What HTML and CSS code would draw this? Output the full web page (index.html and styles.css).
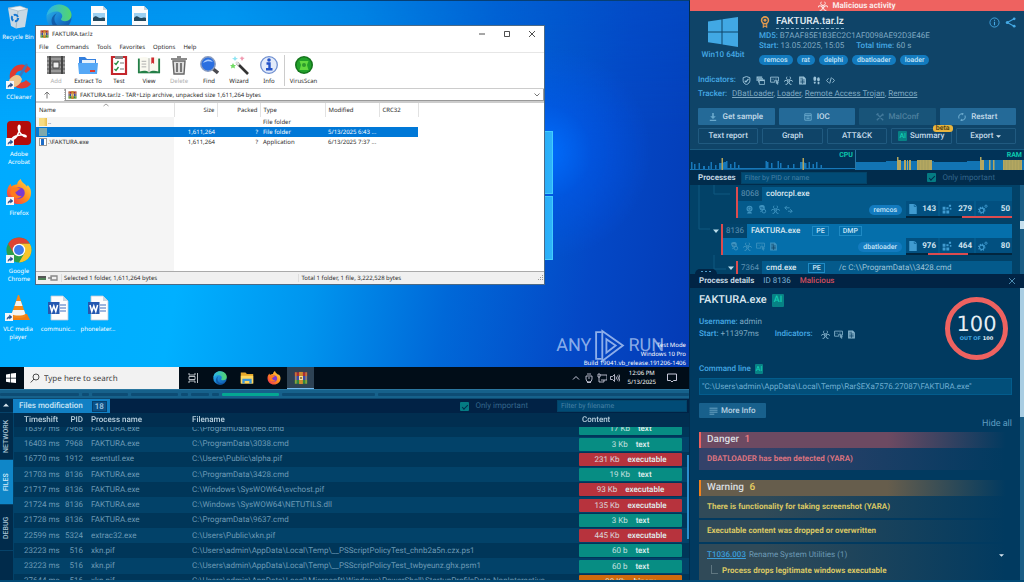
FILE: index.html
```html
<!DOCTYPE html>
<html lang="en">
<head>
<meta charset="utf-8">
<title>FAKTURA.tar.lz - Malicious activity</title>
<link rel="stylesheet" href="styles.css">
</head>
<body>
<svg class="defs" aria-hidden="true">
  <defs>
    <linearGradient id="g-edge" x1="0" y1="0" x2="1" y2="1"><stop offset="0" stop-color="#2fc0e8"/><stop offset=".5" stop-color="#1a84d6"/><stop offset="1" stop-color="#0c4fa0"/></linearGradient>
    <linearGradient id="g-edge2" x1="0" y1="0" x2="1" y2="0"><stop offset="0" stop-color="#2ab4ea"/><stop offset="1" stop-color="#55d66a"/></linearGradient>
    <linearGradient id="g-fox" x1="1" y1="0" x2="0" y2="1"><stop offset="0" stop-color="#ffe14a"/><stop offset=".5" stop-color="#ff8a1c"/><stop offset="1" stop-color="#f0245c"/></linearGradient>
    <symbol id="biohazard" viewBox="0 0 16 16"><g fill="none" stroke="currentColor" stroke-width="1.500"><path id="horn" d="M5.400 1.200A3.600 3.600 0 1 0 10.600 1.200"/><use href="#horn" transform="rotate(120 8 8.800)"/><use href="#horn" transform="rotate(240 8 8.800)"/><circle cx="8" cy="8.800" r="2.200" stroke-width="1"/></g></symbol>
    <symbol id="report" viewBox="0 0 16 16"><path d="M2 1h8.500L14 4.500V15H2z" fill="currentColor"/><path d="M4 4h5M4 7h8M4 9.500h8M4 12h8M8 6v8" stroke="#0f4468" stroke-width="1.200"/></symbol>
    <symbol id="screen" viewBox="0 0 16 16"><path d="M1 2h14v7h-3v-1.500h-3.500V11H1z" fill="none" stroke="currentColor" stroke-width="1.500"/><path d="M3.500 4.500v3M6 4.500v3M8.500 5h4M11 9l4.500 2-2 1 1 2.500-1.200.5-1-2.400-1.300 1z" fill="currentColor" stroke="currentColor" stroke-width=".7"/></symbol>
    <symbol id="windows-stack" viewBox="0 0 16 16"><path d="M1 1h10v2H3v6H1zM3.500 3.800h9V6H5v5.500H3.500z" fill="currentColor"/><path d="M6 6.800h9.200V15H6z" fill="none" stroke="currentColor" stroke-width="1.400"/><path d="M6 8h9" stroke="currentColor" stroke-width="2"/></symbol>
    <symbol id="shield" viewBox="0 0 16 16"><path d="M8 1l6 2v5c0 3.500-2.500 6-6 7.300C4.500 14 2 11.500 2 8V3z" fill="none" stroke="currentColor" stroke-width="1.700"/><path d="M4.800 8.500l2.200 2 4.500-5.500" fill="none" stroke="currentColor" stroke-width="2"/></symbol>
    <symbol id="steps" viewBox="0 0 16 16"><g fill="currentColor"><ellipse cx="5" cy="5" rx="2.600" ry="4"/><path d="M3.200 10h3.400v2.200a1.700 1.700 0 0 1-3.400 0z"/><ellipse cx="11.500" cy="6" rx="2.400" ry="3.700"/><path d="M10 10.600h3.200v2.600a1.600 1.600 0 0 1-3.200 0z"/></g></symbol>
    <symbol id="code" viewBox="0 0 16 16"><path d="M4.500 4L1 8l3.500 4M11.500 4L15 8l-3.500 4M9.500 2.500l-3 11" fill="none" stroke="currentColor" stroke-width="1.600"/></symbol>
    <symbol id="webcam" viewBox="0 0 16 16"><circle cx="8" cy="6.500" r="5.300" fill="currentColor"/><circle cx="8" cy="6.500" r="2.600" fill="none" stroke="#0b5c8e" stroke-width="1.200"/><path d="M5 12.500h6l1.500 2.500h-9z" fill="currentColor"/></symbol>
    <symbol id="bug" viewBox="0 0 16 16"><path d="M2 4a5 3.500 0 0 1 10-1v4a5 3 0 0 1-8 2z" fill="currentColor"/><path d="M4 4.500h5M5 7l5-1" stroke="#0b5c8e"/><circle cx="10.500" cy="11" r="3.200" fill="none" stroke="currentColor" stroke-width="1.600"/><path d="M4 12l3-1.500" stroke="currentColor" stroke-width="1.600"/></symbol>
    <symbol id="swap" viewBox="0 0 16 16"><path d="M5 1.500L1.500 5 5 8.500M1.500 5H10M11 7.500l3.500 3.500-3.500 3.500M14.500 11H7" fill="none" stroke="currentColor" stroke-width="1.700"/></symbol>
    <symbol id="doc" viewBox="0 0 16 16"><path d="M2 0h8.500L14 3.500V16H2z" fill="currentColor"/><path d="M10 .5V4h3.500" stroke="#035788" fill="none"/></symbol>
    <symbol id="modules" viewBox="0 0 16 16"><path d="M1 4.500h4.500V9H1zM1 10.500h4.500V15H1zM7 10.500h4.500V15H7zM7 5h3.500v3.500H7zM11 1h3.500v3.500H11zM12.500 6.500H15V9h-2.500z" fill="currentColor"/></symbol>
    <symbol id="gears" viewBox="0 0 16 16"><g fill="none" stroke="currentColor"><circle cx="6" cy="10" r="3.500" stroke-width="1.800"/><circle cx="6" cy="10" r="5" stroke-width="1.800" stroke-dasharray="1.900 2.030"/><circle cx="12.800" cy="3.500" r="1.800" stroke-width="1.400"/></g></symbol>
    <symbol id="books" viewBox="0 0 22 20"><path d="M1 1h20v6H1z" fill="#a82c38"/><path d="M1 7h20v6H1z" fill="#3c49a8"/><path d="M1 13h20v6H1z" fill="#2f8740"/><path d="M3 1v18M19 1v18" stroke="#d9b23b" stroke-width="1.500"/><path d="M8 0h6v20H8z" fill="#cf8b2d"/><path d="M8 7h6v6H8z" fill="#f4e09a"/><path d="M10 8.500h2v3h-2z" fill="#6b4718"/></symbol>
    <symbol id="edge" viewBox="0 0 28 28"><circle cx="14" cy="14" r="13.500" fill="url(#g-edge)"/><path d="M.7 12.500C2 5 7.500.5 14 .5c8 0 13.500 5.700 13.500 11.300 0 4-3.200 6.700-7 6.700-3 0-4.300-1-4.300-2 0-.8 1.300-1.300 1.300-3.500 0-3-3-5-6.500-5-4 0-8 2-10.300 4.500z" fill="url(#g-edge2)"/><path d="M9 16c0 6 5.500 9.500 11 8.500 2-.4 4-1.400 5-2.500-2 3.500-6 5.500-10.500 5.500C8 27 5.500 21 6 17c.4-3.500 3-6 5.500-7C10 11.500 9 13.500 9 16z" fill="#0d4f9c" opacity=".75"/></symbol>
    <symbol id="firefox" viewBox="0 0 28 28"><path d="M14 27C6.500 27 1 21.500 1 14.500c0-4 1.500-7 4-9.500l.8 3.200C8 6.500 10 6 12 6c0-2.500 2-5 4-6 .5 4 4.500 5 6.500 8l1-1.500C26.500 10 27 12 27 15c0 7-5.500 12-13 12z" fill="url(#g-fox)"/><circle cx="14" cy="15" r="6.200" fill="#7a3ad0"/><path d="M6 11c3-3 7-1.500 10-.5-3 .8-3.500 3-6 3.500.5 3 3.500 5 7 4-2 4-10 3.500-12-1.500-.6-1.800-.4-4 1-5.500z" fill="#ff7a1c"/></symbol>
    <symbol id="chrome" viewBox="0 0 28 28"><circle cx="14" cy="14" r="13.500" fill="#2c9e4b"/><path d="M14 .5A13.500 13.500 0 0 1 25.700 7.300H14L8.200 17.300 2.300 7.300A13.500 13.500 0 0 1 14 .5z" fill="#dd4433"/><path d="M25.700 7.300A13.500 13.500 0 0 1 14 27.500L19.800 17.500 14 7.300z" fill="#f8c52c"/><circle cx="14" cy="14" r="6.700" fill="#fff"/><circle cx="14" cy="14" r="5.300" fill="#3b7ded"/></symbol>
    <symbol id="word" viewBox="0 0 22 26"><path d="M4 1h12l5 5v19H4z" fill="#fdfdfd" stroke="#b9c9da" stroke-width=".8"/><path d="M16 1v5h5z" fill="#c8d6e2"/><path d="M13 10h6M13 13h6M13 16h6" stroke="#7f9fd4" stroke-width="1.300"/><path d="M1 7h11.500v12H1z" fill="#2457b0"/><path d="M3 10l1.800 6.500 2-5.500 2 5.500L10.600 10" stroke="#fff" stroke-width="1.500" fill="none"/></symbol>
    <symbol id="picture" viewBox="0 0 18 20"><path d="M1 0h12l4 4v16H1z" fill="#fbfcfd"/><path d="M13 0v4h4z" fill="#c4d0da"/><path d="M3 7h12v8H3z" fill="#9cd0f2"/><path d="M3 12c3-4 5 0 7 0s3-1 5 0v3H3z" fill="#23475c"/></symbol>
    <symbol id="shortcut" viewBox="0 0 8 8"><path d="M0 0h8v8H0z" fill="#f3f6fa"/><path d="M2 6.500c0-2 1-3 2.500-3V2L7 4 4.500 6V4.800" fill="#24508e" stroke="#24508e" stroke-width=".5"/></symbol>
    <symbol id="folder" viewBox="0 0 18 16"><path d="M1 1h6l2 2h8v12H1z" fill="#e4a72a"/><path d="M1 5h16v10H1z" fill="#ffd75e"/><path d="M3 9h12v6h-3v-3H6v3H3z" fill="#3a95d8"/></symbol>
  </defs>
</svg>
<main class="app">
  <section class="left">
    <div class="screen">
      <i class="pane pane-top"></i><i class="pane pane-bottom"></i>
      <div class="shortcut s-bin"><svg viewBox="0 0 22 24"><path d="M1 3l12-2 8 3-3 18-9 1.500L4 21z" fill="#c9d9e4"/><path d="M1 3l10 3 10-2-8-3z" fill="#eef5f9" stroke="#8fa9ba" stroke-width=".6"/><path d="M11 6l-2 17" stroke="#a3b8c5"/><circle cx="8" cy="13" r="3.200" fill="none" stroke="#1577d2" stroke-width="2" stroke-dasharray="5 1.700"/></svg><span>Recycle Bin</span></div>
      <div class="shortcut s-cc"><svg viewBox="0 0 26 26"><path d="M25 6A12 12 0 1 0 25 21l-5-4a6 6 0 1 1 0-7z" fill="#df3c31"/><path d="M21 1l-7 12" stroke="#3a78bd" stroke-width="2.500"/><path d="M3 17c4-5 8-6 11-4l2 3c-1 5-5 8-11 9z" fill="#eec58c"/><use href="#shortcut" x="0" y="18" width="8" height="8"/></svg><span>CCleaner</span></div>
      <div class="shortcut s-pdf"><svg viewBox="0 0 26 26"><rect x="1" y="1" width="24" height="24" rx="4" fill="#b30d0b"/><path d="M6 19c1-3 12-6 14-3 1 2-5 0-7-5-2-6 1-7 1-4 0 5-5 14-8 12z" fill="none" stroke="#fff" stroke-width="1.600"/><use href="#shortcut" x="0" y="18" width="8" height="8"/></svg><span>Adobe Acrobat</span></div>
      <div class="shortcut s-fox"><svg viewBox="0 0 26 26"><use href="#firefox" width="26" height="26"/><use href="#shortcut" x="0" y="18" width="8" height="8"/></svg><span>Firefox</span></div>
      <div class="shortcut s-chrome"><svg viewBox="0 0 26 26"><use href="#chrome" width="26" height="26"/><use href="#shortcut" x="0" y="18" width="8" height="8"/></svg><span>Google Chrome</span></div>
      <div class="shortcut s-vlc"><svg viewBox="0 0 26 26"><path d="M5 19h17l3 6H1z" fill="#ef7d15"/><path d="M13 0h1l7 21c-3 3-12 3-15 0z" fill="#f58a1b"/><path d="M11.200 6h4.600l1.700 5h-8zM8 15h11l1.400 4c-3 2-11 2-13.800 0z" fill="#f4f4f2"/><use href="#shortcut" x="0" y="18" width="8" height="8"/></svg><span>VLC media player</span></div>
      <div class="shortcut s-edge"><svg viewBox="0 0 28 28"><use href="#edge" width="28" height="28"/></svg></div>
      <div class="shortcut pic s-pic1"><svg viewBox="0 0 18 20"><use href="#picture" width="18" height="20"/></svg></div>
      <div class="shortcut pic s-pic2"><svg viewBox="0 0 18 20"><use href="#picture" width="18" height="20"/></svg></div>
      <div class="shortcut s-doc1"><svg viewBox="0 0 22 26"><use href="#word" width="22" height="26"/></svg><span>communic...</span></div>
      <div class="shortcut s-doc2"><svg viewBox="0 0 22 26"><use href="#word" width="22" height="26"/></svg><span>phonelater...</span></div>

      <div class="window">
        <header class="win-title"><svg class="i8" viewBox="0 0 22 20"><use href="#books" width="22" height="20"/></svg><span>FAKTURA.tar.lz</span>
          <div class="win-ctl"><button aria-label="Minimize"><svg viewBox="0 0 8 8"><path d="M1 4h6" stroke="#222" stroke-width=".8" fill="none"/></svg></button><button aria-label="Maximize"><svg viewBox="0 0 8 8"><path d="M1.500 1.500h5v5h-5z" stroke="#222" stroke-width=".8" fill="none"/></svg></button><button aria-label="Close"><svg viewBox="0 0 8 8"><path d="M1 1l6 6M7 1L1 7" stroke="#222" stroke-width=".8" fill="none"/></svg></button></div>
        </header>
        <nav class="menu"><button>File</button><button>Commands</button><button>Tools</button><button>Favorites</button><button>Options</button><button>Help</button></nav>
        <div class="tools">
          <button class="off"><svg viewBox="0 0 20 20"><path d="M1 1h18v18H1z" fill="#777"/><path d="M1 4h18M1 8h18M1 12h18M1 16h18" stroke="#bbb"/><path d="M4 1v18M16 1v18" stroke="#444" stroke-width="2"/><path d="M7 7h6v6H7z" fill="#eee" stroke="#444"/></svg>Add</button>
          <button><svg viewBox="0 0 20 20"><path d="M1 2h6l2 2h9v4H1z" fill="#3580de"/><path d="M4 5h13v5H4z" fill="#e7f1fb"/><path d="M0 8h20l-1 11H1z" fill="#55a8f6"/><path d="M12 15h5v2h-5z" fill="#e03b30"/></svg>Extract To</button>
          <button><svg viewBox="0 0 20 20"><path d="M3 2h14v17H3z" fill="#fff" stroke="#c4262c" stroke-width="2.200"/><path d="M6 1h8v3H6z" fill="#888"/><path d="M5.500 8l1.500 1.500L9.500 6M5.500 14l1.500 1.500 2.500-3.500" stroke="#248a3e" stroke-width="1.300" fill="none"/><path d="M11 8h4M11 14h4" stroke="#777"/></svg>Test</button>
          <button><svg class="wide" viewBox="0 0 26 20"><path d="M1 3h24v16H1z" fill="#247f47"/><path d="M3 2c4-1 7-1 10 1 3-2 6-2 10-1v15c-4-1-7-1-10 1-3-2-6-2-10-1z" fill="#faf9f0"/><path d="M13 3v15M5 6h5M5 9h5M5 12h5" stroke="#aaa"/><path d="M15.500 2h3v7l-1.500-1.500L15.500 9z" fill="#cf2c31"/></svg>View</button>
          <button class="off"><svg viewBox="0 0 20 20"><path d="M4 6h12l-1 13H5z" fill="#ddd" stroke="#666" stroke-width="1.400"/><path d="M2 4h16M8 2h4M8 8v9M12 8v9" stroke="#666" stroke-width="1.700"/></svg>Delete</button>
          <button><svg viewBox="0 0 20 20"><path d="M13 13l6 5" stroke="#4b4b50" stroke-width="3.500"/><circle cx="9" cy="9" r="7.200" fill="#2b6fe0" stroke="#8a9cbf" stroke-width="1.500"/><path d="M4 8c2-4 7-5 10-1-4-1-6-1-10 1z" fill="#a9ccff"/></svg>Find</button>
          <button><svg viewBox="0 0 20 20"><path d="M8 8l11 11" stroke="#333" stroke-width="2.600"/><path d="M7 7l3 3" stroke="#ddd" stroke-width="2.600"/><path d="M4 8l1 2 2 0-1.500 1.500.5 2-2-1-2 1 .5-2L1 10h2z" fill="#72dc66"/><path d="M6 1l1 2 2 .5-2 1L6 6 5 4.500l-2-1L5 3z" fill="#8ce4f2"/><path d="M13 1l.7 1.600 2 .4-1.500 1L13 6l-1-2-1.500-1 1.700-.5z" fill="#f097ae"/></svg>Wizard</button>
          <button><svg viewBox="0 0 20 20"><circle cx="10" cy="10" r="8.300" fill="#e3ebfa" stroke="#6f8fd0" stroke-width="1.300"/><path d="M7.500 8.500h3V14M7 14.300h6.500" stroke="#2453c8" stroke-width="2.400" fill="none"/><circle cx="10" cy="5" r="1.800" fill="#2453c8"/></svg>Info</button>
          <button class="scan"><svg viewBox="0 0 20 20"><circle cx="10" cy="10" r="9" fill="#15751d"/><circle cx="10" cy="10" r="7.400" fill="#22a12a"/><path d="M5.500 6h9l-1.500 4 1.500 5h-9L7 10z" fill="#63d93f"/><circle cx="10" cy="10" r="2" fill="#2f9a2c"/></svg>VirusScan</button>
        </div>
        <div class="addr"><button aria-label="Up one level"><svg viewBox="0 0 8 8"><path d="M4 7.500V1M1.500 3.500L4 1l2.500 2.500" stroke="#777" fill="none"/></svg></button><div class="path"><svg class="i8" viewBox="0 0 22 20"><use href="#books" width="22" height="20"/></svg><span>FAKTURA.tar.lz - TAR+Lzip archive, unpacked size 1,611,264 bytes</span><svg class="chev" viewBox="0 0 8 8"><path d="M1.500 2.500L4 5l2.500-2.500" stroke="#777" fill="none"/></svg></div></div>
        <div class="listing">
        <table class="files-list">
          <colgroup><col class="c-name"><col class="c-size"><col class="c-size"><col class="c-type"><col class="c-mod"><col class="c-crc"></colgroup>
          <thead><tr><th>Name<svg class="sort" viewBox="0 0 8 4"><path d="M1.500 3L4 1l2.500 2" stroke="#888" stroke-width=".8" fill="none"/></svg></th><th class="num">Size</th><th class="num">Packed</th><th>Type</th><th>Modified</th><th>CRC32</th></tr></thead>
          <tbody>
          <tr><td><div class="nm"><i class="fold"></i>..</div></td><td></td><td></td><td>File folder</td><td></td><td></td></tr>
          <tr class="sel"><td><div class="nm"><i class="fold"></i>.</div></td><td class="num">1,611,264</td><td class="num">?</td><td>File folder</td><td>5/13/2025 6:43 ...</td><td></td></tr>
          <tr><td><div class="nm"><i class="exe"></i>.\FAKTURA.exe</div></td><td class="num">1,611,264</td><td class="num">?</td><td>Application</td><td>6/13/2025 7:37 ...</td><td></td></tr>
          </tbody>
        </table>
        </div>
        <footer class="status"><svg viewBox="0 0 20 8"><path d="M0 2h8v4H0z" fill="#555"/><path d="M0 5h8" stroke="#48b058"/><path d="M10 4h4M13 2h6v4h-6z" stroke="#888" stroke-width="1.300" fill="none"/></svg><span>Selected 1 folder, 1,611,264 bytes</span><span>Total 1 folder, 1 file, 3,222,528 bytes</span><svg class="grip" viewBox="0 0 8 8"><path d="M6 1h1v1H6zM4 3h1v1H4zM6 3h1v1H6zM2 5h1v1H2zM4 5h1v1H4zM6 5h1v1H6z" fill="#999"/></svg></footer>
      </div>

      <div class="brand"><span>ANY</span><svg viewBox="0 0 30 34"><path d="M7 4H2v26h5M8 3v29l20-15zM12 11v13l9-7z" fill="none" stroke="currentColor" stroke-width="1.800"/></svg><span>RUN</span></div>
      <div class="build">Test Mode<br>Windows 10 Pro<br>Build 19041.vb_release.191206-1406</div>

      <div class="taskbar">
        <button class="start" aria-label="Start"><svg viewBox="0 0 10 10"><path d="M0 1.400l4.300-.7v4H0zM5 .6L10 0v4.700H5zM0 5.400h4.300v4L0 8.700zM5 5.400h5V10l-5-.6z" fill="#fff"/></svg></button>
        <label class="search"><svg viewBox="0 0 10 10"><circle cx="6" cy="4" r="3" fill="none" stroke="#222" stroke-width=".8"/><path d="M4 6L.7 9.500" stroke="#222" stroke-width=".8"/></svg><input type="text" placeholder="Type here to search" aria-label="Type here to search"></label>
        <button aria-label="Task view"><svg viewBox="0 0 14 14"><path d="M3 2v2h6V2M3 12v-2h6v2M3 5.500h6v3H3zM11.500 2v10" fill="none" stroke="#cdd3d8" stroke-width=".9"/></svg></button>
        <button aria-label="Edge"><svg viewBox="0 0 28 28"><use href="#edge" width="28" height="28"/></svg></button>
        <button aria-label="Explorer"><svg viewBox="0 0 18 16"><use href="#folder" width="18" height="16"/></svg></button>
        <button aria-label="Firefox"><svg viewBox="0 0 28 28"><use href="#firefox" width="28" height="28"/></svg></button>
        <button class="on" aria-label="WinRAR"><svg viewBox="0 0 22 20"><use href="#books" width="22" height="20"/></svg></button>
        <div class="tray">
          <svg viewBox="0 0 10 10"><path d="M2 6.500L5 3.500l3 3" fill="none" stroke="#dde" stroke-width=".9"/></svg>
          <svg viewBox="0 0 10 10"><path d="M2 3h6v3a3 3 0 0 1-6 0zM3 1h4M3 9.500h4M4 5h2" fill="none" stroke="#dde" stroke-width=".8"/></svg>
          <svg viewBox="0 0 10 10"><path d="M3 2h7v5H4M1 1h2v3H1zM2 4v5h5M7 7v2" fill="none" stroke="#dde" stroke-width=".8"/></svg>
          <svg viewBox="0 0 10 10"><path d="M.5 3.500h2l2-2v7l-2-2h-2zM6 3.500q1 1.500 0 3M7.500 2.500q2 2.500 0 5M9 1.500q2 3.500 0 7" fill="none" stroke="#dde" stroke-width=".8"/></svg>
          <div class="clock">12:06 PM<br>5/13/2025</div>
          <svg viewBox="0 0 10 10"><path d="M.5 1h9v6.500h-3L5 9 3.500 7.500h-3z" fill="none" stroke="#dde" stroke-width=".9"/></svg>
        </div>
      </div>
    </div>

    <div class="timeline"><i style="flex-grow:79"></i><i style="flex-grow:7"></i><i style="flex-grow:37"></i><i style="flex-grow:47"></i><i style="flex-grow:7"></i><i style="flex-grow:18"></i><i style="flex-grow:7"></i><i class="on" style="flex-grow:57"></i><i style="flex-grow:94"></i><i style="flex-grow:312"></i></div>

    <section class="bottom">
      <nav class="side"><button class="fold-btn" aria-label="Collapse"><svg viewBox="0 0 8 8"><path d="M1 5.500h6L4 2.500z" fill="#d8e6ef"/></svg></button><button class="t1">NETWORK</button><button class="t2 on">FILES</button><button class="t3">DEBUG</button></nav>
      <div class="files">
        <header class="files-bar"><h2>Files modification <b>18</b></h2><label class="tick"><input type="checkbox" checked>Only important</label><input class="filter" type="text" placeholder="Filter by filename" aria-label="Filter by filename"></header>
        <div class="files-scroll">
        <table class="events">
          <colgroup><col class="e-time"><col class="e-pid"><col class="e-proc"><col><col class="e-cont"></colgroup>
          <thead><tr><th>Timeshift</th><th class="num">PID</th><th>Process name</th><th>Filename</th><th>Content</th></tr></thead>
          <tbody>
          <tr><td>16397 ms</td><td class="num">7968</td><td>FAKTURA.exe</td><td>C:\ProgramData\neo.cmd</td><td><span class="tag"><span>17 Kb</span><b>text</b></span></td></tr>
          <tr><td>16403 ms</td><td class="num">7968</td><td>FAKTURA.exe</td><td>C:\ProgramData\3038.cmd</td><td><span class="tag"><span>3 Kb</span><b>text</b></span></td></tr>
          <tr><td>16770 ms</td><td class="num">1912</td><td>esentutl.exe</td><td>C:\Users\Public\alpha.pif</td><td><span class="tag exec"><span>231 Kb</span><b>executable</b></span></td></tr>
          <tr><td>21703 ms</td><td class="num">8136</td><td>FAKTURA.exe</td><td>C:\ProgramData\3428.cmd</td><td><span class="tag"><span>19 Kb</span><b>text</b></span></td></tr>
          <tr><td>21717 ms</td><td class="num">8136</td><td>FAKTURA.exe</td><td>C:\Windows \SysWOW64\svchost.pif</td><td><span class="tag exec"><span>93 Kb</span><b>executable</b></span></td></tr>
          <tr><td>21724 ms</td><td class="num">8136</td><td>FAKTURA.exe</td><td>C:\Windows \SysWOW64\NETUTILS.dll</td><td><span class="tag exec"><span>135 Kb</span><b>executable</b></span></td></tr>
          <tr><td>21728 ms</td><td class="num">8136</td><td>FAKTURA.exe</td><td>C:\ProgramData\9637.cmd</td><td><span class="tag"><span>3 Kb</span><b>text</b></span></td></tr>
          <tr><td>22599 ms</td><td class="num">5324</td><td>extrac32.exe</td><td>C:\Users\Public\xkn.pif</td><td><span class="tag exec"><span>445 Kb</span><b>executable</b></span></td></tr>
          <tr><td>23223 ms</td><td class="num">516</td><td>xkn.pif</td><td>C:\Users\admin\AppData\Local\Temp\__PSScriptPolicyTest_chnb2a5n.czx.ps1</td><td><span class="tag"><span>60 b</span><b>text</b></span></td></tr>
          <tr><td>23223 ms</td><td class="num">516</td><td>xkn.pif</td><td>C:\Users\admin\AppData\Local\Temp\__PSScriptPolicyTest_twbyeunz.ghx.psm1</td><td><span class="tag"><span>60 b</span><b>text</b></span></td></tr>
          <tr><td>27644 ms</td><td class="num">516</td><td>xkn.pif</td><td>C:\Users\admin\AppData\Local\Microsoft\Windows\PowerShell\StartupProfileData-NonInteractive</td><td><span class="tag bin"><span>28 Kb</span><b>binary</b></span></td></tr>
          </tbody>
        </table>
        <i class="thumb"></i>
        </div>
      </div>
    </section>
  </section>

  <aside class="right">
    <div class="verdict"><svg viewBox="0 0 16 16"><use href="#biohazard" width="16" height="16"/></svg>Malicious activity</div>
    <section class="task">
      <div class="sample">
        <div class="os"><svg viewBox="0 0 30 30"><path d="M0 4.500L13.500 2.500V14.500H0zM14.500 2.300L30 0V14.500H14.500zM0 15.500h13.500v11.700L0 25.300zM14.500 15.500H30V30l-15.500-2.500z" fill="#41a8e4"/></svg>Win10 64bit</div>
        <div class="info">
          <h1><svg viewBox="0 0 12 14"><circle cx="6" cy="5" r="4" fill="none" stroke="#e49a4d" stroke-width="1.800"/><circle cx="6" cy="5" r="1.700" fill="#e49a4d"/><path d="M4 8.500V13l2-1.500L8 13V8.500" fill="none" stroke="#e49a4d" stroke-width="1.300"/></svg><span>FAKTURA.tar.lz</span>
            <button class="ic push" aria-label="Info"><svg viewBox="0 0 12 12"><circle cx="6" cy="6" r="5" fill="none" stroke="#45a9e4"/><path d="M6 5.200V9M6 3v1.200" stroke="#45a9e4" stroke-width="1.200"/></svg></button><button class="ic" aria-label="Share"><svg viewBox="0 0 12 12"><path d="M10 2L2.500 6l7.500 4" fill="none" stroke="#45a9e4" stroke-width="1.200"/><circle cx="10" cy="2" r="1.500" fill="#45a9e4"/><circle cx="2.500" cy="6" r="1.700" fill="#45a9e4"/><circle cx="10" cy="10" r="1.500" fill="#45a9e4"/></svg></button></h1>
          <p><b>MD5:</b> B7AAF85E1B3EC2C1AF0098AE92D3E46E</p>
          <p><b>Start:</b> 13.05.2025, 15:05 <b class="total">Total time:</b> 60 s</p>
          <div class="chips"><span>remcos</span><span>rat</span><span>delphi</span><span>dbatloader</span><span>loader</span></div>
        </div>
      </div>
      <div class="line"><b>Indicators:</b><span class="icons"><svg><use href="#shield"/></svg><svg><use href="#windows-stack"/></svg><svg><use href="#screen"/></svg><svg><use href="#biohazard"/></svg><svg><use href="#report"/></svg><svg><use href="#steps"/></svg><svg><use href="#code"/></svg></span></div>
      <div class="line track"><b>Tracker:</b><span><a href="#">DBatLoader</a>, <a href="#">Loader</a>, <a href="#">Remote Access Trojan</a>, <a href="#">Remcos</a></span></div>
      <div class="actions a1">
        <button><svg viewBox="0 0 10 10"><path d="M4 0h2v4h2.500L5 7.500 1.500 4H4zM1 8.500h8V10H1z" fill="#6aa9cc"/></svg>Get sample</button>
        <button><svg viewBox="0 0 10 10"><path d="M1 1h8v8H1zM1 3h8M3 5h4M3 7h4" fill="none" stroke="#6aa9cc" stroke-width="1.200"/></svg>IOC</button>
        <button class="dim"><svg viewBox="0 0 10 10"><path d="M1 1l8 8M9 1L1 9M.5 2.500L3 .5M8 3l1.500-1" fill="none" stroke="#42799b" stroke-width="1.600"/></svg>MalConf</button>
        <button><svg viewBox="0 0 10 10"><path d="M1.500 7A4 4 0 0 1 5.500 1M8.500 3A4 4 0 0 1 4.500 9M4.500 0l1.800 1-1.500 1.500M5.500 10L3.700 9l1.500-1.500" fill="none" stroke="#6aa9cc" stroke-width="1.300"/></svg>Restart</button>
      </div>
      <div class="actions a2"><button>Text report</button><button>Graph</button><button>ATT&amp;CK</button><button><i class="ai">AI</i>Summary<em>beta</em></button><button>Export <svg class="car" viewBox="0 0 8 8"><path d="M0 2h8L4 6z" fill="#cfe0ec"/></svg></button></div>
    </section>
    <div class="load">
      <div class="cpu"><svg viewBox="0 0 165 20" preserveAspectRatio="none"><path d="M0 20v-1h1v-7h1.500v7H4v-5h1.500v5h3v-6H10v6h3v-3h2v3h3v-3h1.500v3h1v-7H22v7h3v-4h1.500v4H29v-6h4.500v-1H36v-1h1.500v7H40v-4h1.500v4H44v-6h1.500v6h2.500v-3h1.500v3h26v-7H77v1h1.500v6H81v-5h1.500v5h5v-7H89v7h1v-5h1.500v5h6v-3H99v3h4v-4h1.500v4H110v-6h4.500v1h2v5h2v-6h1.500v6h2.500v-4h1.500v4h2v-6h1.500v6h3v-3h1.500v3H165v1z" fill="#1778b9"/><path d="M31.500 8h1.500v12h-1.500zM112.500 8h1.500v12h-1.500z" fill="#b3a45c"/></svg>CPU</div>
      <div class="ram"><svg viewBox="0 0 168 20" preserveAspectRatio="none"><path d="M0 12h30v-1h48v1h33v-1h15v-1h42v10H0z" fill="#1274b4"/><path d="M41 7h1.500v3H45v10h-4zM48 10h2v10h-2zM51 10h1v10h-1zM53 10h2v10h-2zM61 10h15v10H61zM124 7h1.500v3H128v10h-4zM133 10h1.500v10H133zM137 10h1.500v10H137zM147 10h19v10h-19z" fill="#b4a760"/><path d="M63 10v10M66 10v10M69 10v10M72 10v10M149 10v10M152 10v10M155 10v10M158 10v10M161 10v10M164 10v10" stroke="#8f935f" stroke-width=".5"/></svg>RAM</div>
    </div>
    <header class="proc-bar"><h2>Processes</h2><input class="filter" type="text" placeholder="Filter by PID or name" aria-label="Filter by PID or name"><label class="tick"><input type="checkbox" checked>Only important</label></header>
    <div class="tree">
      <svg class="wires" viewBox="0 0 60 88"><path d="M9 0v44h11M24 0v9h16M24 70v14h12" fill="none" stroke="#0f5880"/></svg>
      <div class="proc deep"><div class="head"><i>8068</i><b>colorcpl.exe</b></div><div class="foot"><span class="icons"><svg><use href="#webcam"/></svg><svg><use href="#bug"/></svg><svg><use href="#biohazard"/></svg><svg><use href="#swap"/></svg></span><span class="chip">remcos</span><span class="stats u1"><span><svg><use href="#doc"/></svg>143</span><span><svg><use href="#modules"/></svg>279</span><span><svg><use href="#gears"/></svg>50</span></span></div></div>
      <div class="proc cur"><svg class="open" viewBox="0 0 8 8"><path d="M0 2h8L4 6.500z" fill="#b9dcea"/></svg><div class="head"><i>8136</i><b>FAKTURA.exe</b><u>PE</u><u>DMP</u></div><div class="foot"><span class="icons"><svg><use href="#bug"/></svg><svg><use href="#biohazard"/></svg><svg><use href="#screen"/></svg><svg><use href="#report"/></svg></span><span class="chip">dbatloader</span><span class="stats u2"><span><svg><use href="#doc"/></svg>976</span><span><svg><use href="#modules"/></svg>464</span><span><svg><use href="#gears"/></svg>80</span></span></div></div>
      <div class="proc deep"><svg class="open" viewBox="0 0 8 8"><path d="M0 2h8L4 6.500z" fill="#b9dcea"/></svg><div class="head"><i>7364</i><b>cmd.exe</b><u>PE</u><s>/c C:\\ProgramData\\3428.cmd</s></div><div class="foot"></div></div>
      <span class="more-tab" aria-hidden="true"><i></i><i></i><i></i></span>
      <i class="thumb2"></i>
    </div>
    <header class="det-bar"><h2>Process details</h2><span>ID 8136</span><strong>Malicious</strong><button class="ic" aria-label="Close"><svg viewBox="0 0 8 8"><path d="M1 1l6 6M7 1L1 7" stroke="#4a8ab0" fill="none"/></svg></button></header>
    <section class="details">
      <div class="det-body">
        <div class="det-top">
          <div>
            <h3>FAKTURA.exe <i class="ai big">AI</i></h3>
            <p><b>Username:</b> admin</p>
            <p class="row"><span><b>Start:</b> +11397ms</span><b>Indicators:</b><span class="icons"><svg><use href="#biohazard"/></svg><svg><use href="#screen"/></svg><svg><use href="#report"/></svg></span></p>
            <h4>Command line <i class="ai">AI</i></h4>
          </div>
          <div class="score"><span>100</span><small>OUT OF <b>100</b></small></div>
        </div>
        <div class="cmd">"C:\Users\admin\AppData\Local\Temp\Rar$EXa7576.27087\FAKTURA.exe"</div>
        <button class="more"><svg viewBox="0 0 10 10"><path d="M0 1.500h10M0 4h10M0 6.500h10M0 9h6" stroke="#7fb2d0"/></svg>More Info</button>
        <button class="hide">Hide all</button>
        <div class="group danger"><h5>Danger <b>1</b></h5><p>DBATLOADER has been detected (YARA)</p></div>
        <div class="group warn"><h5>Warning <b>6</b></h5><p>There is functionality for taking screenshot (YARA)</p><p>Executable content was dropped or overwritten</p>
          <div class="tech"><div><a href="#">T1036.003</a> <span>Rename System Utilities (1)</span><svg viewBox="0 0 8 8"><path d="M0 2h8L4 6z" fill="#d8e6ef"/></svg></div><div class="sub">Process drops legitimate windows executable</div></div></div>
      </div>
      <i class="thumb3"></i>
    </section>
  </aside>
</main>
</body>
</html>
```
FILE: styles.css
```css
* { box-sizing: border-box; }
html, body { height: 100%; }
body { margin: 0; background: #024a75; font: 8px/10px Roboto, "Liberation Sans", sans-serif; color: #7fa9c2; overflow: hidden; text-rendering: geometricPrecision; }
h1, h2, h3, h4, h5, p { margin: 0; font-size: inherit; font-weight: inherit; }
button { font: inherit; color: inherit; background: none; border: 0; padding: 0; text-rendering: inherit; }
input { font: inherit; color: inherit; border: 0; padding: 0; margin: 0; background: none; min-width: 0; text-rendering: inherit; }
i, em, s, u { font-style: normal; text-decoration: none; }
svg { display: block; flex: none; }
table { border-collapse: collapse; table-layout: fixed; }
th { font-weight: inherit; text-align: left; }
td, th { padding: 0; white-space: nowrap; }
.defs { position: absolute; width: 0; height: 0; }
.num { text-align: right; }

.app { height: 100vh; padding-bottom: 2px; display: grid; grid-template-columns: minmax(0, 690fr) minmax(0, 334fr); }
.left { display: grid; grid-template-rows: minmax(0, 389fr) 10px minmax(0, 181fr); min-height: 0; border-right: 1px solid #012c4c; border-top: 1px solid #073f74; }

/* remote desktop */
.screen { position: relative; overflow: hidden; font: 6px/8px "Noto Sans", "Open Sans", sans-serif; color: #fff;
  background: radial-gradient(circle at 79% 39%, rgba(0, 110, 255, .95) 0, rgba(0, 90, 240, .5) 8%, rgba(0, 80, 230, 0) 18%), linear-gradient(180deg, rgba(0, 80, 200, .3) 0, rgba(0, 80, 200, 0) 35%), linear-gradient(100deg, #00aaff 0, #00b0ff 30%, #0095ee 48%, #0068d8 66%, #0448c6 84%, #043ab4 100%); }
.pane { position: absolute; left: 76%; width: 29px; background: linear-gradient(90deg, #189af4, #2eb4fa); border: 1px solid #43cdfc; }
.pane-top { top: 130px; height: 63px; }
.pane-bottom { top: 195px; height: 64px; }
.shortcut { position: absolute; width: 38px; display: flex; flex-direction: column; align-items: center; text-align: center; gap: 4px; }
.shortcut svg { width: 26px; height: 26px; }
.s-bin { left: -1px; top: 4px; }
.s-bin span { white-space: nowrap; }
.s-bin svg { width: 22px; height: 24px; }
.s-cc { left: 0; top: 62px; }
.s-pdf { left: 0; top: 119px; }
.s-fox { left: 0; top: 178px; }
.s-chrome { left: 0; top: 236px; }
.s-vlc { left: -1px; top: 294px; }
.s-edge { left: 40px; top: 3px; }
.pic svg { width: 18px; height: 20px; }
.s-pic1 { left: 80px; top: 5px; }
.s-pic2 { left: 121px; top: 5px; }
.s-doc1 { left: 39px; top: 294px; }
.s-doc2 { left: 79px; top: 294px; }

.window { position: absolute; left: 35px; width: 74%; top: 24px; height: 260px; background: #fff; color: #2a2a2a; border: 1px solid #4c6a86; display: flex; flex-direction: column; }
.i8 { width: 9px; height: 8px; }
.win-title { display: flex; align-items: center; gap: 3px; height: 16px; padding: 0 4px; }
.win-ctl { margin-left: auto; display: flex; gap: 17px; padding-right: 4px; }
.win-ctl svg { width: 8px; height: 8px; }
.menu { display: flex; gap: 8px; height: 11px; padding: 0 3px; align-items: center; border-bottom: 1px solid #e6e6e6; }
.tools { display: grid; grid-template-columns: 32px 32px repeat(6, 30px) 38px; height: 36px; padding: 2px 4px; border-bottom: 1px solid #ccc; }
.tools button { display: flex; flex-direction: column; align-items: center; gap: 2px; white-space: nowrap; }
.tools svg { width: 20px; height: 20px; }
.tools .wide { width: 24px; }
.tools .off { color: #b0b0b0; }
.tools .scan { border-left: 1px solid #ccc; }
.addr { display: flex; height: 14px; border-bottom: 2px solid #ccc; align-items: center; }
.addr button { width: 29px; display: flex; justify-content: center; padding-right: 6px; border-right: 1px dotted #bbb; height: 12px; align-items: center; }
.addr button svg, .chev { width: 8px; height: 8px; }
.path { flex: 1; display: flex; align-items: center; gap: 3px; border: 1px solid #999; border-top: 0; height: 12px; padding: 0 2px; }
.chev { margin-left: auto; }
.listing { flex: 1; background: linear-gradient(90deg, #f5f5f5 138px, #fff 138px); border-bottom: 1px solid #aaa; }
.files-list { width: 382px; }
.c-name { width: 138px; }
.c-size { width: 43px; }
.c-type { width: 65px; }
.c-mod { width: 54px; }
.c-crc { width: 39px; }
.files-list th { height: 14px; padding: 0 3px; background: #fff; border-right: 1px solid #e2e2e2; position: relative; }
.files-list td { height: 10px; padding: 0 3px; line-height: 10px; }
.files-list .num { padding-right: 2px; }
.sort { position: absolute; left: 66px; top: 0; width: 8px; height: 4px; }
.nm { display: flex; align-items: center; gap: 1px; height: 10px; }
.nm i { width: 8px; height: 8px; flex: none; }
.fold { background: linear-gradient(90deg, #f7dc82 60%, #e9bc4b); }
.sel .fold { background: #7fa9ac; }
.exe { border: 1px solid #999; background: linear-gradient(90deg, #fff 1px, #1c6cc8 1px, #1c6cc8 4px, #fff 4px); }
.sel { background: #0078d7; color: #fff; }
.status { height: 12px; background: #f0f0f0; display: flex; align-items: center; padding-left: 2px; gap: 3px; }
.status svg { width: 20px; height: 8px; }
.status span { flex: 1; border-left: 1px solid #ddd; padding-left: 2px; }
.status .grip { width: 8px; }

.brand { position: absolute; right: 25px; bottom: 26px; display: flex; align-items: center; gap: 3px; color: rgba(215, 230, 255, .65); font: 18px/30px "Liberation Sans Narrow", Roboto, sans-serif; }
.brand svg { width: 31px; height: 35px; }
.build { position: absolute; right: 3px; bottom: 21px; text-align: right; line-height: 9px; white-space: nowrap; }

.taskbar { position: absolute; left: 0; right: 0; bottom: 0; height: 22px; background: #010d18; display: flex; align-items: stretch; }
.taskbar button { width: 27px; display: flex; align-items: center; justify-content: center; }
.taskbar button svg { width: 14px; height: 14px; }
.taskbar .start { width: 24px; padding-right: 2px; }
.taskbar .start svg { width: 10px; height: 10px; }
.taskbar .on { background: #2d4254; border-bottom: 1px solid #76b9ed; }
.search { width: 155px; background: #f2f2f2; display: flex; align-items: center; gap: 4px; padding-left: 6px; }
.search svg { width: 10px; height: 10px; }
.search input { flex: 1; font-size: 8px; }
.search input::placeholder { color: #444; opacity: 1; }
.tray { margin-left: auto; display: flex; align-items: center; gap: 3px; padding-right: 12px; }
.tray svg { width: 10px; height: 10px; }
.clock { text-align: center; line-height: 9px; padding: 0 8px 0 5px; }

.timeline { display: flex; gap: 3px; align-items: center; background: #16618b; border-top: 1px solid #2a769f; border-bottom: 1px solid #0d4970; }
.timeline i { height: 3px; flex: 1 1 0; background: #0d4c74; border-radius: 1px; }
.timeline .on { background: #04a792; }

/* files panel */
.bottom { display: grid; grid-template-columns: 13px minmax(0, 1fr); min-height: 0; background: #013a60; }
.side { display: flex; flex-direction: column; background: #012b4b; color: #a9c5d6; }
.side button { writing-mode: vertical-rl; transform: rotate(180deg); border-top: 1px solid #064269; display: flex; align-items: center; justify-content: center; line-height: 13px; font-size: 7px; font-weight: 500; }
.side .fold-btn { height: 14px; }
.side .fold-btn svg { width: 8px; height: 8px; transform: rotate(180deg); }
.t1 { height: 47px; }
.t2 { height: 45px; }
.t3 { height: 46px; }
.side .on { background: #0f86c8; color: #d6ecfa; }
.files { display: flex; flex-direction: column; min-height: 0; }
.files-bar { display: flex; align-items: center; height: 14px; background: #012245; padding-right: 2px; }
.files-bar h2 { align-self: stretch; display: flex; align-items: center; gap: 9px; background: #1180c4; color: #c9e4f5; font-weight: 500; padding: 0 3px 0 6px; white-space: nowrap; }
.files-bar h2 b { background: #0b5288; color: #a5c9e2; font-weight: 500; line-height: 9px; padding: 0 2px; border: 1px solid #073f6b; }
.tick { display: flex; align-items: center; gap: 6px; color: #33658a; white-space: nowrap; }
.files-bar .tick { margin-left: auto; margin-right: 29px; }
.tick input { appearance: none; width: 9px; height: 9px; border-radius: 1px; background: #047b83; display: grid; place-items: center; }
.tick input::after { content: ""; width: 5px; height: 2px; border: solid #012c4c; border-width: 0 0 1px 1px; transform: rotate(-45deg); }
.filter { background: #014b76; height: 12px; padding: 0 3px; border: 1px solid #034468; font-size: 7px; }
.filter::placeholder { color: #4580a4; opacity: 1; }
.files-bar .filter { width: 130px; }
.files-scroll { flex: 1; min-height: 0; position: relative; overflow: hidden; border-left: 1px solid #024269; }
.events { width: 100%; height: 109%; margin-top: -6px; color: #6d9ab5; }
.events thead { position: sticky; top: 0; z-index: 1; background: #012e50; color: #b9d0de; font-weight: 500; }
.events th { height: 14px; }
.events td { height: 15px; overflow: hidden; padding: 0; }
.events td:last-child { padding-right: 7px; }
.events th:first-child, .events td:first-child { padding-left: 10px; }
.events th:nth-child(3), .events td:nth-child(3) { padding-left: 8px; }
.events th:last-child { padding-left: 3px; }
.events tbody tr:nth-child(odd) { background: #003659; }
.events tbody tr:nth-child(even) { background: #024269; }
.e-time { width: 46px; }
.e-pid { width: 23px; }
.e-proc { width: 109px; }
.e-cont { width: 110px; }
.tag { display: flex; justify-content: center; gap: 8px; height: 13px; line-height: 13px; background: #078d83; border-radius: 1px; color: #e1f0f0; }
.tag span { opacity: .85; }
.tag b { font-weight: 500; }
.exec { background: #b7333d; }
.bin { background: #cf6a0d; }
.thumb { position: absolute; right: 0; top: 42px; width: 2px; height: 84px; background: #2b8fce; z-index: 2; }

/* report panel */
.right { display: flex; flex-direction: column; min-height: 0; background: #013a60; }
.verdict { height: 11px; background: #ee6260; color: #fbeaea; font-weight: 700; display: flex; align-items: center; justify-content: center; gap: 4px; }
.verdict svg { width: 10px; height: 10px; }
.task { background: #0f4468; padding: 4px 8px 5px; }
.task b { color: #45a9e4; font-weight: 500; }
.sample { display: grid; grid-template-columns: 50px minmax(0, 1fr); gap: 11px; }
.os { display: flex; flex-direction: column; align-items: center; gap: 3px; padding-top: 2px; color: #45a9e4; font-weight: 500; white-space: nowrap; }
.os svg { width: 30px; height: 30px; }
h1 { display: flex; align-items: center; gap: 5px; height: 14px; color: #e4eef4; font-size: 10px; font-weight: 500; }
h1 > svg { width: 12px; height: 12px; }
h1 span { border-bottom: 1px dashed #7fa9c2; line-height: 13px; }
.ic svg { width: 11px; height: 11px; }
.ic.push { margin-left: auto; }
.info p { line-height: 10px; }
h1 + p { margin-top: 2px; }
.total { margin-left: 10px; }
.chips { display: flex; gap: 4px; margin-top: 4px; }
.chips span, .chip { background: #137bbf; color: #c3e2f5; border-radius: 5px; line-height: 10px; padding: 0 5px; font-size: 7px; font-weight: 500; }
.line { display: flex; align-items: center; gap: 6px; height: 10px; margin-top: 10px; }
.track { margin-top: 4px; gap: 5px; }
.line a { color: inherit; }
.icons { display: flex; gap: 5px; color: #86b3cc; }
.icons svg { width: 9px; height: 9px; }
.task .icons { color: #9cc3d8; }
.actions { display: grid; gap: 4px; font-weight: 500; color: #c3dae8; }
.actions button { display: flex; align-items: center; justify-content: center; gap: 5px; position: relative; white-space: nowrap; height: 17px; border-radius: 1px; }
.a1 { grid-template-columns: repeat(4, minmax(0, 1fr)); margin-top: 9px; }
.a1 button { background: #246a98; }
.a1 svg { width: 8px; height: 8px; }
.a1 .dim { background: #185479; color: #4f819f; }
.a2 { grid-template-columns: repeat(5, minmax(0, 1fr)); margin-top: 3px; }
.a2 button { height: 16px; border: 1px solid #205a80; gap: 3px; }
.actions em { position: absolute; right: -2px; top: -4px; background: #e8b53e; color: #4a3a12; border-radius: 3px; line-height: 7px; font-size: 7px; padding: 0 3px; }
.car { width: 5px; height: 5px; }
.ai { background: #078285; color: #14cbb2; font-size: 7px; line-height: 10px; padding: 0 1px; border-radius: 1px; font-weight: 500; }
.ai.big { font-size: 9px; line-height: 13px; padding: 0 2px; }
.load { display: grid; grid-template-columns: 165fr 169fr; height: 21px; background: #013358; border-top: 1px solid #1b5a80; color: #0cc7ad; font-size: 7px; font-weight: 700; }
.load div { position: relative; text-align: right; padding-right: 2px; }
.load svg { position: absolute; left: 0; top: 0; width: 100%; height: 100%; }
.ram { border-left: 1px solid #2a76a3; }
.proc-bar { display: flex; align-items: center; gap: 5px; height: 15px; background: #012c4c; padding: 0 29px 0 8px; }
.proc-bar h2, .det-bar h2 { color: #c3d6e2; font-weight: 700; }
.proc-bar .filter { flex: 0 1 126px; }
.proc-bar .tick { margin-left: auto; }
.tree { flex: 0 0 89px; position: relative; overflow: hidden; padding: 2px 12px 0 31px; display: flex; flex-direction: column; gap: 6px; background: #024268; }
.wires { position: absolute; left: 0; top: 0; width: 60px; height: 88px; }
.proc { flex: none; height: 31px; background: #045a8b; border-left: 2px solid #dd4b4e; position: relative; display: flex; flex-direction: column; justify-content: space-between; }
.deep { margin-left: 15px; }
.cur { background: #056fab; }
.open { position: absolute; left: -10px; top: 4px; width: 6px; height: 6px; }
.head { display: flex; align-items: center; height: 14px; color: #dbe8f0; white-space: nowrap; }
.head i { width: 24px; height: 14px; line-height: 14px; background: #02446c; color: #5f93b3; text-align: right; padding-right: 3px; margin-right: 4px; flex: none; }
.head b { font-weight: 500; }
.head u { border: 1px solid #1f8ac4; font-size: 7px; line-height: 8px; font-weight: 500; padding: 0 3px; margin-left: 12px; color: #c3e2f5; }
.head u + u { margin-left: 10px; }
.head s { margin-left: 14px; color: #9cc3d8; }
.foot { display: flex; align-items: center; height: 17px; padding-left: 7px; }
.foot .icons { gap: 4px; color: #3f93bf; }
.foot .icons svg { width: 9px; height: 9px; }
.chip { margin-left: auto; margin-right: 4px; }
.stats { display: grid; grid-template-columns: 34px 36px 36px; align-self: stretch; color: #cfe3ef; font-weight: 700; border-bottom: 2px solid; }
.stats span { display: flex; align-items: center; justify-content: space-between; background: #025080; padding: 0 2px; border-right: 2px solid #045a8b; }
.stats span:last-child { border-right: 0; }
.stats svg { width: 10px; height: 10px; color: #409bd0; }
.u1 { border-image: linear-gradient(90deg, #02263f 53%, #dd4b4e 53%) 2; }
.u2 { border-image: linear-gradient(90deg, #02263f 22%, #dd4b4e 22%, #dd4b4e 58%, #02263f 58%) 2; }
.more-tab { position: absolute; left: 5px; bottom: 0; width: 22px; height: 5px; display: flex; justify-content: center; align-items: center; gap: 2px; background: #012445; border-radius: 5px 5px 0 0; }
.more-tab i { width: 2px; height: 1px; background: #4a9bca; }
.thumb2 { position: absolute; right: 0; top: 0; bottom: 0; width: 4px; background: linear-gradient(#1a5d85 36px, #c5dfed 36px, #c5dfed 44px, #1a5d85 44px); }
.det-bar { display: flex; align-items: center; gap: 9px; height: 14px; flex: none; background: #012445; padding: 0 8px 0 9px; color: #7fb5d8; white-space: nowrap; }
.det-bar strong { font-weight: 500; color: #d04d5c; }
.det-bar .ic { margin-left: auto; }
.det-bar .ic svg { width: 8px; height: 8px; }
.details { flex: 1; min-height: 0; position: relative; overflow: hidden; }
.det-body { padding: 5px 12px 0 9px; display: flex; flex-direction: column; }
.thumb3 { position: absolute; right: 0; top: 0; bottom: 0; width: 4px; background: linear-gradient(#a9cde2 129px, #1a5d85 129px); }
.det-top { display: flex; justify-content: space-between; }
.det-top b, h4 { color: #45a9e4; font-weight: 500; }
h3 { display: flex; align-items: center; gap: 5px; font-size: 11px; line-height: 14px; font-weight: 500; color: #dbe8f0; margin-bottom: 9px; }
.det-top p { line-height: 12px; }
.row { display: flex; align-items: center; gap: 8px; }
.row > b { margin-left: 8px; }
.row .icons { gap: 4px; }
h4 { display: flex; gap: 4px; margin: 24px 0 4px; }
.score { width: 63px; height: 63px; border: 5px solid #ee6260; border-radius: 50%; margin: 4px 4px 0 0; display: flex; flex-direction: column; align-items: center; justify-content: center; white-space: nowrap; }
.score span { font: 21px/20px "DejaVu Sans", sans-serif; color: #e4eef4; }
.score small { font: bold 5px/10px "DejaVu Sans", sans-serif; color: #45a9e4; }
.det-top .score b { color: #e4eef4; font-weight: bold; }
.cmd { background: #024f7a; border: 1px solid #035c8c; line-height: 15px; padding: 0 2px; color: #6fadd0; white-space: nowrap; overflow: hidden; }
.more { align-self: flex-start; display: flex; align-items: center; gap: 3px; height: 15px; padding: 0 10px; margin-top: 8px; background: #18608c; color: #b9d3e2; font-weight: 500; border-radius: 1px; }
.more svg { width: 9px; height: 8px; }
.hide { align-self: flex-end; line-height: 10px; margin: 1px 0 3px; color: #5f9dc0; font-size: 9px; }
.group { font-weight: 500; }
.group h5 { line-height: 16px; font-size: 10px; padding-left: 6px; border-left: 2px solid; color: #d9dde0; }
.group h5 b { margin-left: 3px; font-weight: 500; }
.group p { line-height: 22px; padding-left: 8px; font-weight: 700; }
.danger h5 { background: linear-gradient(90deg, #6d4a62 60%, rgba(109, 74, 98, 0) 98%); border-color: #ee6260; }
.danger h5 b { color: #ef7f84; }
.danger p { background: linear-gradient(90deg, #33426a 20%, rgba(51, 66, 106, 0) 98%); color: #d9737f; }
.warn { margin-top: 10px; }
.warn h5 { background: linear-gradient(90deg, #665d4c 60%, rgba(102, 93, 76, 0) 98%); border-color: #f0821e; }
.warn h5 b { color: #e8cf62; }
.warn p, .tech { background: linear-gradient(90deg, #304a58 20%, rgba(48, 74, 88, 0) 98%); color: #d9c764; margin-bottom: 2px; }
.tech { padding: 5px 8px; height: 36px; }
.tech > div { display: flex; gap: 3px; align-items: center; height: 12px; color: #6d9ab5; font-weight: 400; }
.tech a { color: #3a9ddb; font-weight: 500; }
.tech svg { width: 5px; height: 5px; margin-left: auto; }
.tech .sub { color: #d9c764; font-weight: 700; height: 20px; }
.sub::before { content: ""; width: 6px; height: 8px; border: solid #5f7680; border-width: 0 0 1px 1px; margin: -4px 1px 0 4px; }
```
